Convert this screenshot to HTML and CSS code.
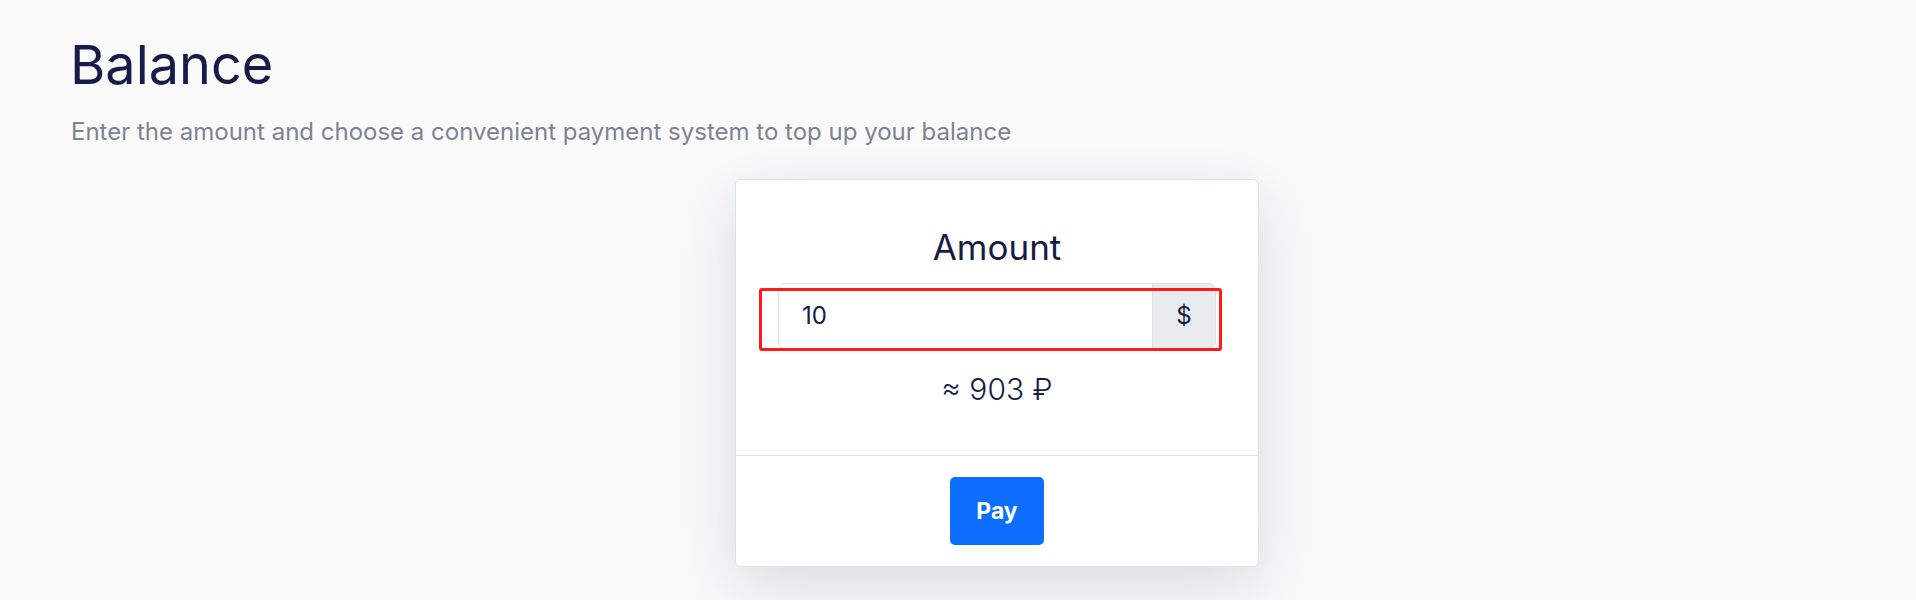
FILE: index.html
```html
<!DOCTYPE html>
<html lang="en">
<head>
	<meta charset="UTF-8">
	<title>Balance</title>
	<meta name="viewport" content="width=device-width, initial-scale=1.0">
	<link rel="stylesheet" href="styles.css">
</head>
<body>

	<div id="page">
		<h1 class="title">Balance</h1>
		<p class="lead">Enter the amount and choose a convenient payment system to top up your balance</p>

		<div class="pay-row">
			<div class="pay-card">
				<div class="pay-body">
					<h2>Amount</h2>
					<div class="amount-group">
						<input type="text" value="10">
						<span class="currency">$</span>
						<div class="highlight"></div>
					</div>
					<p class="rate">&asymp; 903 &#8381;</p>
				</div>
				<div class="pay-footer">
					<button>Pay</button>
				</div>
			</div>
		</div>
	</div>

</body>
</html>
```

FILE: styles.css
```css
body {
	background: #fafafb;
	color: #161c47;
	font-family: Inter, "Noto Sans", sans-serif;
	margin: 0;
	min-height: 100vh;
	padding: 0;
}
#page {
	box-sizing: border-box;
	min-height: 600px;
	padding: 33px 72px 0;
}
.title {
	font-size: 54px;
	font-weight: 400;
	line-height: 1.2;
	margin: 0 0 0 -2px;
}
.lead {
	color: #7e8293;
	font-size: 24px;
	margin: 19px 0 0 -1px;
}
.pay-row {
	display: flex;
	margin-top: 33px;
	padding-left: 663px;
}
.pay-card {
	background: #fff;
	border: 1px solid #dce2ea;
	border-radius: 6px;
	box-shadow: 0 18px 64px rgba(20, 30, 60, .14);
	width: 522px;
}
.pay-body {
	padding: 47px 42px 48px;
	text-align: center;
}
.pay-body h2 {
	font-size: 35px;
	font-weight: 400;
	line-height: 40px;
	margin: 0 0 16px;
}
.amount-group {
	border: 1px solid #dce2ea;
	border-radius: 6px;
	display: flex;
	height: 64px;
	position: relative;
}
.amount-group input {
	background: transparent;
	border: 0;
	color: #161c47;
	flex: 1;
	font-family: inherit;
	font-size: 24px;
	min-width: 0;
	outline: none;
	padding: 0 23px;
}
.currency {
	align-items: center;
	background: #e9ecef;
	border-left: 1px solid #dce2ea;
	border-radius: 0 5px 5px 0;
	display: flex;
	flex: none;
	font-size: 24px;
	justify-content: center;
	width: 62px;
}
.highlight {
	border: 3px solid #ff1a1a;
	border-radius: 3px;
	bottom: -3px;
	left: -20px;
	pointer-events: none;
	position: absolute;
	right: -7px;
	top: 4px;
}
.rate {
	font-size: 30px;
	font-weight: 300;
	line-height: 36px;
	margin: 22px 0 0;
}
.pay-footer {
	border-top: 1px solid #dce2ea;
	padding: 21px 0;
	text-align: center;
}
.pay-footer button {
	background: #0d6efd;
	border: 0;
	border-radius: 5px;
	color: #fff;
	cursor: pointer;
	font-family: inherit;
	font-size: 23px;
	font-weight: 700;
	height: 68px;
	padding: 0 26px;
}
```
